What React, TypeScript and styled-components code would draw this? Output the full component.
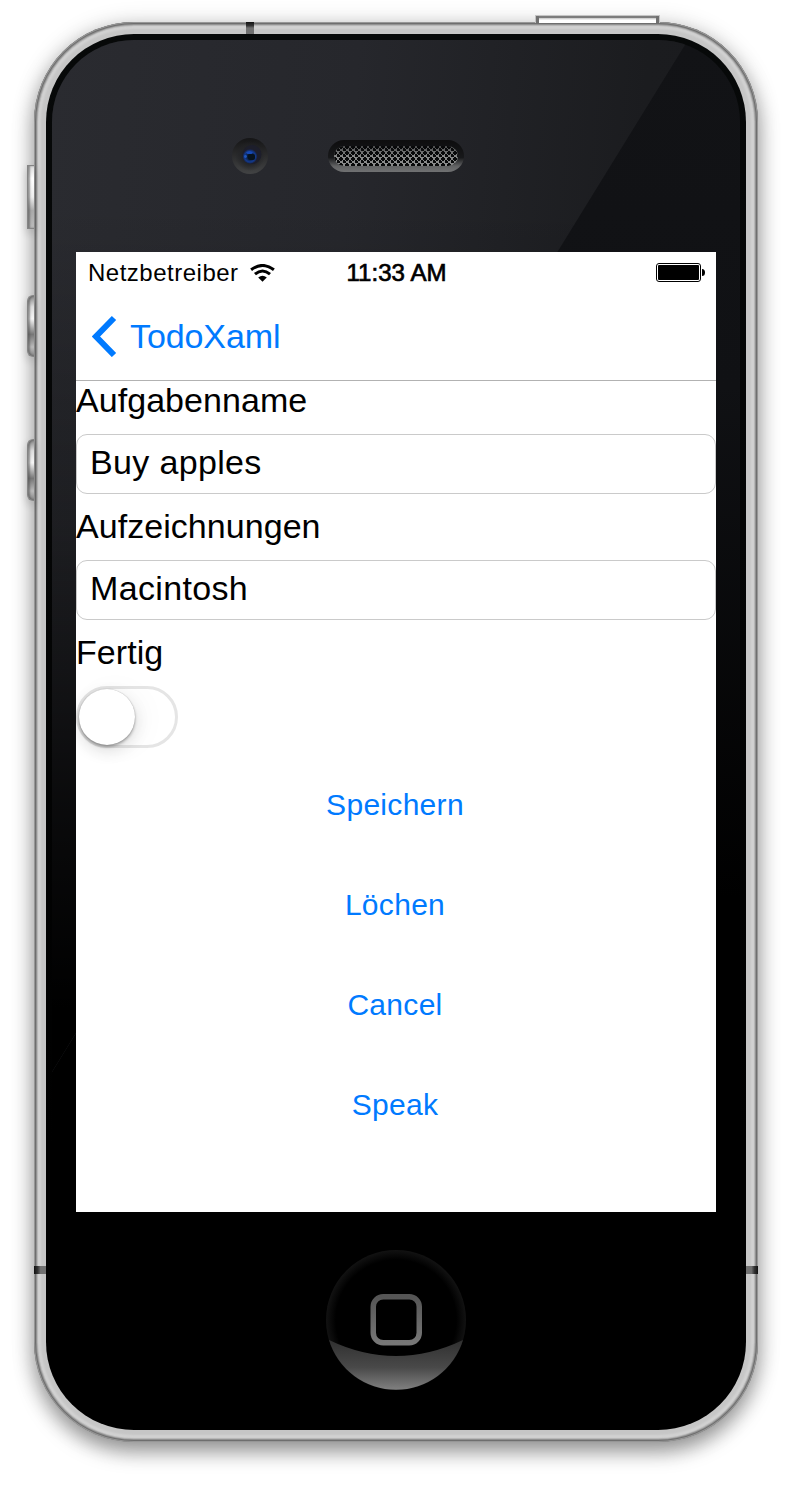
import React from "react";
import styled, { createGlobalStyle } from "styled-components";

const GlobalStyle = createGlobalStyle`
  * { box-sizing: border-box; }
  body { margin: 0; background: #fff; font-family: "Liberation Sans", Arial, sans-serif; }
`;

const Page = styled.main`
  width: 792px;
  height: 1488px;
  padding: 22px 34px 46px;
  background: #fff;
  overflow: hidden;
`;

const Phone = styled.div`
  position: relative;
  width: 724px;
  height: 1420px;
  padding: 12px;
  border-radius: 100px;
  background: #c6c6c6;
  box-shadow:
    inset 0 0 0 1px #969696,
    inset 0 0 0 2px #6e6e6e,
    inset 0 0 0 3px #929292,
    inset 0 0 1px 4px #b4b4b4,
    inset 0 0 2px 7px #d2d2d2,
    0 10px 20px rgba(0, 0, 0, 0.36),
    0 2px 24px rgba(0, 0, 0, 0.16);
`;

const Bezel = styled.div`
  width: 700px;
  height: 1396px;
  padding: 6px;
  border-radius: 88px;
  background: linear-gradient(#070909, #000 80%);
`;

const Glass = styled.div`
  position: relative;
  isolation: isolate;
  display: flex;
  flex-direction: column;
  align-items: center;
  width: 688px;
  height: 1384px;
  border-radius: 82px;
  overflow: hidden;
  background: linear-gradient(#121316, #101114 25%, #000 62%);

  &::before {
    content: "";
    position: absolute;
    z-index: -1;
    inset: 0;
    clip-path: polygon(0 0, 636px 0, 0 1032px);
    background:
      linear-gradient(rgba(0, 0, 0, 0) 12%, rgba(0, 0, 0, 0.3) 35%, rgba(0, 0, 0, 0.75) 55%, #000 70%),
      linear-gradient(95deg, #2a2b30, #26272c 38%, #1b1c1f 74%, #191a1d);
  }
`;

const Forehead = styled.div`
  display: flex;
  width: 100%;
  height: 212px;
  padding: 98px 0 0 180px;
  gap: 60px;
`;

const Camera = styled.svg`
  width: 36px;
  height: 36px;
`;

const Speaker = styled.svg`
  width: 136px;
  height: 32px;
  margin-top: 2px;
`;

const Screen = styled.section`
  width: 640px;
  height: 960px;
  background: #fff;
  color: #000;
  overflow: hidden;
`;

const StatusBar = styled.header`
  display: grid;
  grid-template-columns: 1fr auto 1fr;
  align-items: center;
  height: 40px;
  padding: 1px 11px 0 12px;
  font-size: 24px;
  line-height: 40px;
`;

const Carrier = styled.div`
  display: flex;
  align-items: center;
  gap: 11px;
  letter-spacing: 0.5px;
`;

const Clock = styled.div`
  letter-spacing: 0.05px;
  -webkit-text-stroke: 0.7px #000;
`;

const Battery = styled.svg`
  justify-self: end;
  margin-bottom: 2px;
`;

const NavBar = styled.nav`
  display: flex;
  align-items: center;
  height: 89px;
  padding: 0 16px 1px;
  border-bottom: 1px solid #b2b2b2;
`;

const BackButton = styled.button`
  display: flex;
  align-items: center;
  gap: 13px;
  padding: 0;
  border: 0;
  background: none;
  color: #007aff;
  font: 34px/40px "Liberation Sans", Arial, sans-serif;
  letter-spacing: -0.1px;
`;

const Field = styled.div`
  height: 126px;
`;

const Label = styled.label`
  display: block;
  height: 53px;
  font-size: 34px;
  line-height: 38px;
  letter-spacing: 0.05px;
`;

const Input = styled.input`
  display: block;
  width: 640px;
  height: 60px;
  padding: 0 13px 4px;
  border: 1px solid #cacaca;
  border-radius: 11px;
  outline: 0;
  background: #fff;
  color: #000;
  font: 34px "Liberation Sans", Arial, sans-serif;
  letter-spacing: 0.35px;
`;

const Toggle = styled.button`
  display: flex;
  align-items: center;
  width: 102px;
  height: 62px;
  padding: 0;
  border: 3px solid #e5e5e5;
  border-radius: 31px;
  background: #fff;
`;

const Knob = styled.span`
  width: 56px;
  height: 56px;
  border-radius: 50%;
  background: #fff;
  box-shadow: 0 0 1px rgba(0, 0, 0, 0.3), 0 2px 3px rgba(0, 0, 0, 0.3), 0 6px 16px rgba(0, 0, 0, 0.12), 8px 2px 30px rgba(0, 0, 0, 0.04);
`;

const Actions = styled.div`
  display: flex;
  flex-direction: column;
  align-items: center;
  padding: 21px 2px 0 0;
`;

const Action = styled.button`
  height: 72px;
  margin-bottom: 28px;
  padding: 0;
  border: 0;
  background: none;
  color: #007aff;
  font: 30px "Liberation Sans", Arial, sans-serif;
  letter-spacing: 0.3px;
`;

const HomeButton = styled.svg`
  width: 140px;
  height: 142px;
  margin-top: 37px;
`;

const SideKey = styled.i<{ $top: number; $round?: boolean }>`
  position: absolute;
  left: -7px;
  top: ${(p) => p.$top}px;
  width: 7px;
  height: ${(p) => (p.$round ? 62 : 64)}px;
  border: 1px solid #858585;
  border-right: 0;
  border-radius: ${(p) => (p.$round ? "6px 0 0 6px" : "0")};
  background: ${(p) =>
    p.$round
      ? "linear-gradient(#888, #ddd 18%, #f6f6f6 38%, #777 64%, #bbb 85%, #888)"
      : "linear-gradient(#ddd, #fff 20%, #eee 50%, #aaa 72%, #bbb)"};
  box-shadow: inset 2px 0 2px rgba(80, 80, 80, 0.6), 0 4px 8px rgba(0, 0, 0, 0.2);
`;

const PowerKey = styled.i`
  position: absolute;
  top: -7px;
  left: 501px;
  width: 125px;
  height: 8px;
  border: 1px solid #c4c4c4;
  border-bottom: 0;
  background: linear-gradient(#8a8a8a, #fff 60%);
  box-shadow: inset 3px 0 #707070, inset -3px 0 #707070, inset 0 2px #7c7c7c;
`;

const Seam = styled.i<{ $side: "top" | "left" | "right" }>`
  position: absolute;
  ${(p) =>
    p.$side === "top"
      ? "top: 0; left: 212px; width: 8px; height: 12px; background: linear-gradient(#111, #333 30%, #707070 50%);"
      : `top: 1244px; ${p.$side}: 0; width: 12px; height: 8px; background: linear-gradient(to ${
          p.$side === "left" ? "right" : "left"
        }, #111, #333 30%, #707070 55%);`}
`;

const fields = [
  { id: "name", label: "Aufgabenname", value: "Buy apples" },
  { id: "notes", label: "Aufzeichnungen", value: "Macintosh" },
];

const actions = ["Speichern", "Löchen", "Cancel", "Speak"];

export default function App() {
  return (
    <>
      <GlobalStyle />
      <Page>
        <Phone>
          <PowerKey />
          <SideKey $top={143} />
          <SideKey $top={273} $round />
          <SideKey $top={417} $round />
          <Seam $side="top" />
          <Seam $side="left" />
          <Seam $side="right" />
          <Bezel>
            <Glass>
              <Forehead>
                <Camera viewBox="0 0 36 36">
                  <defs>
                    <linearGradient id="camRing" x2="0" y2="1">
                      <stop stopColor="#151516" />
                      <stop offset="1" stopColor="#424344" />
                    </linearGradient>
                    <radialGradient id="camShade">
                      <stop offset="0.5" stopColor="#222326" />
                      <stop offset="1" stopColor="#222326" stopOpacity="0" />
                    </radialGradient>
                    <radialGradient id="lens">
                      <stop stopColor="#06101c" />
                      <stop offset="0.35" stopColor="#0a1c38" />
                      <stop offset="0.75" stopColor="#12398c" />
                      <stop offset="1" stopColor="#182448" />
                    </radialGradient>
                  </defs>
                  <circle cx="18" cy="18" r="18" fill="url(#camRing)" />
                  <circle cx="18" cy="18" r="15" fill="url(#camShade)" />
                  <circle cx="20" cy="16.500" r="9.500" fill="#1d1e2b" />
                  <circle cx="18" cy="18.500" r="7.200" fill="url(#lens)" />
                  <path d="M14 14.500q4-3 7 0l-1.500 1.500h-4z" fill="#1749b5" />
                  <circle cx="13.500" cy="18.500" r="1.400" fill="#1f57bd" />
                  <rect x="16" y="16" width="7" height="6" rx="2" fill="#07131e" />
                </Camera>
                <Speaker viewBox="0 0 136 32">
                  <defs>
                    <linearGradient id="slot" x2="0" y2="1">
                      <stop stopColor="#0d0d0e" />
                      <stop offset="0.55" stopColor="#17181a" />
                      <stop offset="0.82" stopColor="#626364" />
                      <stop offset="1" stopColor="#707172" />
                    </linearGradient>
                    <linearGradient id="mesh" x2="0" y2="1">
                      <stop stopColor="#494a4b" />
                      <stop offset="0.5" stopColor="#858686" />
                      <stop offset="1" stopColor="#8b8c8c" />
                    </linearGradient>
                    <pattern id="holes" x="5" y="5" width="6" height="6" patternUnits="userSpaceOnUse">
                      <path d="M1 0h2v1h1v2h-1v1h-2v-1h-1v-2h1zM4 3h2v1h-2zM4 4h2v2h-2zM0 4h1v2h-1z" fill="#08090a" />
                    </pattern>
                  </defs>
                  <rect width="136" height="32" rx="16" fill="url(#slot)" />
                  <rect x="6" y="6" width="124" height="20" rx="10" fill="url(#mesh)" />
                  <rect x="6" y="6" width="124" height="20" rx="10" fill="url(#holes)" />
                </Speaker>
              </Forehead>
              <Screen>
                <StatusBar>
                  <Carrier>
                    <span>Netzbetreiber</span>
                    <svg width="25" height="18" viewBox="0 0 25 18" fill="none" stroke="#000" strokeWidth="3">
                      <path d="M1.100 5.800Q12.500-2.900 23.900 5.800M5 10.200Q12.500 3.800 20 10.200" />
                      <path d="M8.200 13.500Q12.500 9.800 16.800 13.500L12.500 17.800Z" fill="#000" stroke="none" />
                    </svg>
                  </Carrier>
                  <Clock>11:33 AM</Clock>
                  <Battery width="49" height="19" viewBox="0 0 49 19">
                    <rect x="0.500" y="0.500" width="44" height="18" rx="2.500" fill="none" stroke="#000" />
                    <rect x="2" y="2" width="41" height="15" rx="1" />
                    <path d="M46 6q3 0 3 3.500t-3 3.500z" />
                  </Battery>
                </StatusBar>
                <NavBar>
                  <BackButton>
                    <svg width="25" height="42" viewBox="0 0 25 42" fill="none" stroke="#007aff" strokeWidth="6">
                      <path d="M22 3L4 21.500L22 40" />
                    </svg>
                    TodoXaml
                  </BackButton>
                </NavBar>
                {fields.map((f) => (
                  <Field key={f.id}>
                    <Label htmlFor={f.id}>{f.label}</Label>
                    <Input id={f.id} defaultValue={f.value} />
                  </Field>
                ))}
                <Label as="div">Fertig</Label>
                <Toggle role="switch" aria-checked="false" aria-label="Fertig">
                  <Knob />
                </Toggle>
                <Actions>
                  {actions.map((a) => (
                    <Action key={a}>{a}</Action>
                  ))}
                </Actions>
              </Screen>
              <HomeButton viewBox="0 0 140 142">
                <defs>
                  <radialGradient id="homeEdge">
                    <stop offset="0.86" stopColor="#000" />
                    <stop offset="1" stopColor="#121212" />
                  </radialGradient>
                  <linearGradient id="homeShine" x2="0" y2="1">
                    <stop stopColor="#303030" />
                    <stop offset="0.55" stopColor="#494949" />
                    <stop offset="1" stopColor="#808080" />
                  </linearGradient>
                  <linearGradient id="homeIcon" x2="0" y2="1">
                    <stop stopColor="#555" />
                    <stop offset="1" stopColor="#777" />
                  </linearGradient>
                </defs>
                <circle cx="70" cy="71" r="70" fill="url(#homeEdge)" />
                <path d="M3 91Q70 123 137 91A70 70 0 0 1 3 91Z" fill="url(#homeShine)" />
                <rect x="47.250" y="47.750" width="46" height="46" rx="10" fill="none" stroke="url(#homeIcon)" strokeWidth="5.500" />
              </HomeButton>
            </Glass>
          </Bezel>
        </Phone>
      </Page>
    </>
  );
}
